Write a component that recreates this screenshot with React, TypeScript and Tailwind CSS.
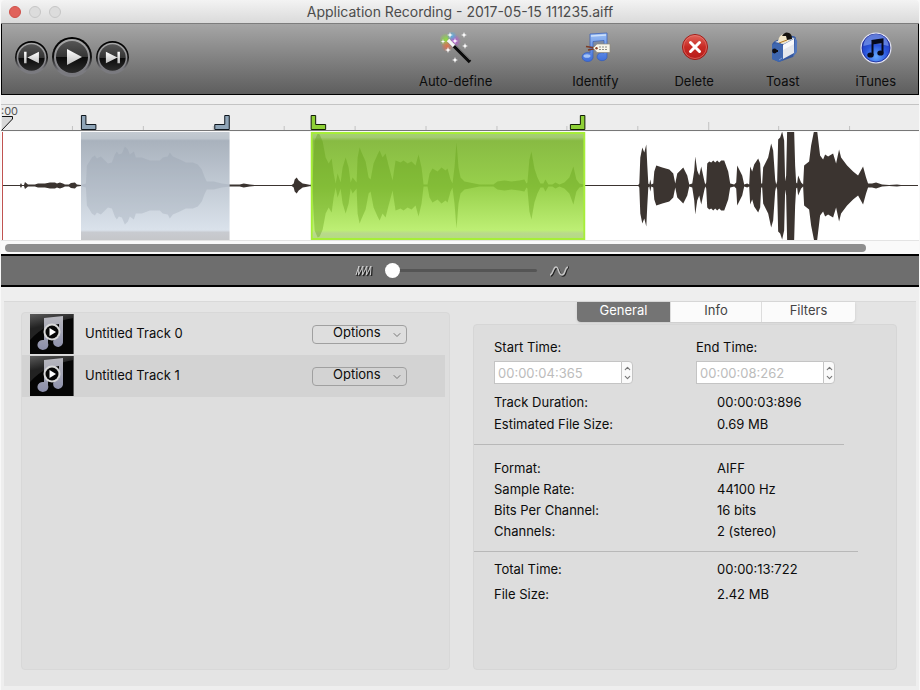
import React, { useState } from 'react';
import { ChevronDown, ChevronUp } from 'lucide-react';

// x position and half height of the waveform envelope
const envelope: [number, number][] = [
    [2, 0.4], [19, 0.4], [20, 0.4], [21, 2.5], [22, 0.5], [24, 0.5], [25, 3.5], [28, 1], [31, 1], [35, 1], [38, 2], [45, 2], [50, 3], [55, 3], [57, 2],
    [60, 3], [63, 2], [65, 1], [69, 1], [71, 2.5], [75, 3], [77, 1], [81, 0.5],
    [86, 2], [87, 20], [89, 23], [92, 28], [95, 30], [97, 27], [101, 29], [104, 26], [108, 22], [112, 23], [115, 31], [117, 34], [119, 31], [122, 32],
    [125, 39], [128, 36], [130, 31], [134, 34], [136, 28], [142, 28], [150, 25], [160, 25], [163, 28], [168, 29], [170, 33], [173, 29], [180, 26],
    [186, 23], [193, 23], [198, 21], [202, 16], [205, 8], [207, 4], [214, 4], [222, 2], [230, 1],
    [240, 1], [244, 2], [250, 1], [255, 0.5], [270, 0.4], [292, 0.4], [294, 2], [295, 6], [297, 8], [299, 5], [303, 2], [306, 1.5], [311, 0.5],
    [313, 10], [315, 45], [318, 52], [320, 51], [323, 44], [326, 28], [329, 22], [332, 27], [334, 12], [336, 2], [338, 12], [341, 3], [343, 18],
    [346, 28], [349, 18], [351, 3], [353, 8], [357, 3], [358, 28], [360, 38], [362, 33], [366, 24], [369, 8], [371, 6], [374, 22], [378, 31],
    [380, 35], [383, 28], [386, 32], [389, 20], [393, 5], [396, 25], [401, 23], [404, 25], [408, 22], [412, 24], [416, 20], [419, 31], [422, 18],
    [424, 1], [428, 1], [430, 12], [433, 17], [438, 14], [442, 18], [446, 15], [448, 17], [451, 6], [453, 2], [455, 18], [457, 43], [459, 18],
    [461, 8], [465, 4], [470, 3], [480, 1], [490, 1], [494, 1], [498, 4], [505, 5], [512, 4], [520, 5], [525, 6], [527, 2], [528, 3], [530, 26],
    [532, 34], [535, 17], [538, 8], [541, 2], [544, 2], [546, 6], [549, 1], [553, 1], [556, 3], [560, 1], [565, 3], [570, 8], [574, 19], [577, 6],
    [580, 2], [586, 0.4],
    [639, 0.4], [640, 2], [641, 28], [643, 38], [645, 33], [647, 41], [648, 20], [649, 2], [650, 1], [651, 6], [652, 1], [654, 2], [655, 14], [657, 20], [663, 18],
    [670, 16], [674, 12], [676, 2], [678, 12], [684, 18], [688, 10], [690, 1], [693, 2], [695, 15], [696, 29], [698, 15], [700, 10], [702, 19],
    [705, 5], [706, 1], [707, 3], [708, 22], [710, 24], [712, 23], [714, 25], [716, 23], [718, 25], [720, 23], [722, 25], [725, 25], [729, 14], [731, 2],
    [735, 1], [737, 3], [738, 20], [743, 10], [745, 1], [748, 2], [750, 1], [751, 19], [753, 14], [755, 21], [759, 27], [761, 22], [762, 2], [763, 2],
    [764, 18], [769, 28], [772, 42], [774, 35], [776, 6], [777, 1], [778, 4], [779, 46], [781, 48], [783, 54], [785, 45], [786, 4], [787, 10], [788, 55],
    [795, 55], [796, 20], [797, 3], [798, 2], [799, 10], [802, 3], [804, 1], [805, 20], [810, 24], [812, 40], [815, 55], [818, 55], [821, 30], [824, 26],
    [826, 31], [829, 29], [834, 32], [837, 22], [840, 36], [842, 28], [848, 20], [854, 14], [859, 10], [864, 19], [867, 8], [869, 2], [873, 2], [877, 3],
    [883, 1], [890, 0.5], [898, 1], [902, 0.6], [919, 0.4],
];

const wavePath =
    'M' + envelope.map(([x, a]) => `${x} ${54.5 - a}`).join('L') +
    'L' + [...envelope].reverse().map(([x, a]) => `${x} ${54.5 + a}`).join('L') + 'Z';

const ticks = [72, 143, 213, 284, 355, 426, 497, 567, 638, 709, 779, 850];

const tracks = ['Untitled Track 0', 'Untitled Track 1'];

const Ruler = () => (
    <div className="relative h-[27px] overflow-hidden border-t border-[#c4c4c4] border-b border-b-[#777777] bg-[#ededed]">
        <span className="absolute left-0 top-0 text-[11px] leading-[13px] text-[#555555]">:00</span>
        <svg className="absolute inset-0 h-full w-full" viewBox="1 105 919 25" preserveAspectRatio="none">
            {ticks.map((x) => (
                <path key={x} d={`M${x + 0.5} ${x === 709 ? 122 : 126}V130`} stroke="#c2c2c2" />
            ))}
            <path d="M2 116.5H12.5V119L2 130" fill="#d8d8d8" stroke="#111111" />
            <path d="M81.5 115.5h4.5v9h10v5h-14.5z M229.5 115.5h-4.5v9h-10v5h14.5z" fill="#8fa5b8" stroke="#0c141c" />
            <path d="M311.5 115.5h4.5v9h10v5h-14.5z M585.5 115.5h-4.5v9h-10v5h14.5z" fill="#8ed036" stroke="#101c04" />
        </svg>
    </div>
)

const Waveform = () => (
    <svg className="block h-[110px] w-full bg-white" viewBox="1 0 919 110" preserveAspectRatio="none">
        <defs>
            <linearGradient id="blue" x1="0" y1="0" x2="0" y2="1">
                <stop offset="0" stopColor="#c3cad1" />
                <stop offset="0.06" stopColor="#bcc4cc" />
                <stop offset="0.08" stopColor="#a9b2bd" />
                <stop offset="0.9" stopColor="#dae2eb" />
                <stop offset="0.92" stopColor="#c8cbd0" />
                <stop offset="1" stopColor="#c5c6c9" />
            </linearGradient>
            <linearGradient id="green" x1="0" y1="0" x2="0" y2="1">
                <stop offset="0" stopColor="#a9d377" />
                <stop offset="0.05" stopColor="#a2cb70" />
                <stop offset="0.08" stopColor="#88bb43" />
                <stop offset="0.5" stopColor="#98d04c" />
                <stop offset="0.9" stopColor="#bdef74" />
                <stop offset="0.93" stopColor="#b9d98c" />
                <stop offset="1" stopColor="#b2dc7c" />
            </linearGradient>
            <clipPath id="blueClip"><path d="M81 0h149v110h-149z" /></clipPath>
            <clipPath id="greenClip"><path d="M311 0h275v110h-275z" /></clipPath>
        </defs>
        <path d={wavePath} fill="#3b3430" />
        <g clipPath="url(#blueClip)">
            <rect x="81" y="1" width="149" height="109" fill="url(#blue)" />
            <path d={wavePath} fill="#8f9ba8" fillOpacity="0.28" />
        </g>
        <g clipPath="url(#greenClip)">
            <rect x="311" y="1" width="275" height="109" fill="url(#green)" />
            <path d={wavePath} fill="#5f9a14" fillOpacity="0.36" />
            <rect x="312" y="2" width="273" height="106" fill="none" stroke="#a6ee38" strokeWidth="2" />
        </g>
        <path d="M2.5 0V109" stroke="#c0504d" />
        <path d="M1 0.5H920" stroke="#fafafa" />
        <path d="M1 109.5H920" stroke="#e4e4e4" />
    </svg>
)

const TransportButton = ({ label, size, children }: {
    label: string
    size: string
    children: React.ReactNode
}) => (
    <button aria-label={label} className={`block rounded-full ${size}`}>
        <svg viewBox="0 0 40 40" className="h-full w-full">
            <defs>
                <linearGradient id="rim" x1="0" y1="0" x2="0" y2="1">
                    <stop offset="0" stopColor="#000000" />
                    <stop offset="0.5" stopColor="#111111" />
                    <stop offset="0.85" stopColor="#7b7b80" />
                </linearGradient>
                <linearGradient id="ring" x1="0" y1="0" x2="0" y2="1">
                    <stop offset="0" stopColor="#a8a8a8" />
                    <stop offset="1" stopColor="#77777d" />
                </linearGradient>
                <linearGradient id="face" x1="0" y1="0" x2="0" y2="1">
                    <stop offset="0" stopColor="#555555" />
                    <stop offset="0.5" stopColor="#343434" />
                    <stop offset="0.51" stopColor="#0a0a0a" />
                    <stop offset="1" stopColor="#2b2b2b" />
                </linearGradient>
                <linearGradient id="glyph" x1="0" y1="0" x2="0" y2="1">
                    <stop offset="0" stopColor="#ffffff" />
                    <stop offset="1" stopColor="#bdbdbd" />
                </linearGradient>
            </defs>
            <circle cx="20" cy="20" r="20" fill="url(#rim)" />
            <circle cx="20" cy="20" r="18" fill="url(#ring)" />
            <circle cx="20" cy="20" r="16" fill="url(#face)" />
            {children}
        </svg>
    </button>
)

const WandIcon = () => (
    <svg viewBox="0 0 32 32" className="h-8 w-8">
        <defs>
            <radialGradient id="g1"><stop offset="0" stopColor="#8ee03c" /><stop offset="1" stopColor="#8ee03c" stopOpacity="0" /></radialGradient>
            <radialGradient id="g2"><stop offset="0" stopColor="#b94bd8" /><stop offset="1" stopColor="#b94bd8" stopOpacity="0" /></radialGradient>
            <radialGradient id="g3"><stop offset="0" stopColor="#e0704a" /><stop offset="1" stopColor="#e0704a" stopOpacity="0" /></radialGradient>
            <radialGradient id="g4"><stop offset="0" stopColor="#58aede" /><stop offset="1" stopColor="#58aede" stopOpacity="0" /></radialGradient>
        </defs>
        <circle cx="6" cy="8" r="7" fill="url(#g1)" />
        <circle cx="14" cy="9" r="7" fill="url(#g2)" />
        <circle cx="7" cy="14" r="6" fill="url(#g3)" />
        <circle cx="12" cy="4" r="5" fill="url(#g4)" />
        <path d="M9 9L30 30" stroke="#0b0b0b" strokeWidth="3.6" />
        <path d="M15 13L30 28" stroke="#777777" strokeWidth="0.8" />
        <path d="M8 8L14 14" stroke="#f6f6f6" strokeWidth="3.6" />
        <path d="M10 0l.7 2.3 2.3.7-2.3.7-.7 2.3-.7-2.3-2.3-.7 2.3-.7zM24 0l.8 2.2 2.2.8-2.2.8-.8 2.2-.8-2.2-2.2-.8 2.2-.8zM25 11l.8 2.2 2.2.8-2.2.8-.8 2.2-.8-2.2-2.2-.8 2.2-.8zM15 6l.7 2.3 2.3.7-2.3.7-.7 2.3-.7-2.3-2.3-.7 2.3-.7zM3 7l.6 1.9 1.9.6-1.9.6-.6 1.9-.6-1.9-1.9-.6 1.9-.6zM8 15l.8 2.2 2.2.8-2.2.8-.8 2.2-.8-2.2-2.2-.8 2.2-.8zM15 25l.8 2.2 2.2.8-2.2.8-.8 2.2-.8-2.2-2.2-.8 2.2-.8z" fill="#ffffff" />
    </svg>
)

const IdentifyIcon = () => (
    <svg viewBox="0 0 32 32" className="h-8 w-8">
        <defs>
            <linearGradient id="note" x1="0" y1="0" x2="0" y2="1">
                <stop offset="0" stopColor="#9cc0f4" />
                <stop offset="1" stopColor="#3d6ddb" />
            </linearGradient>
        </defs>
        <path d="M11 2L28 1V24a5 4 0 1 1-3-3V8.500L14 9.500V26a5.500 4.500 0 1 1-3-5z" fill="url(#note)" stroke="#345cba" strokeWidth="0.7" />
        <path d="M12 4L27 3" stroke="#cfe1fb" strokeWidth="1.5" />
        <path d="M14 10L25 9V20H14z" fill="#5f7fb8" fillOpacity="0.35" />
        <ellipse cx="8" cy="24" rx="3.5" ry="1.8" fill="#a5c4f6" />
        <path d="M17 16L7 14.500M17 16.500L9 18" stroke="#7b3b26" strokeWidth="1.4" />
        <path d="M14 16L18 12H31V20.500H18z" fill="#f8f5ea" stroke="#8f8a7c" strokeWidth="0.7" />
        <circle cx="17.500" cy="16.200" r="1.2" fill="#8a4126" />
        <path d="M20 15H29M20 17.500H29" stroke="#8d8d88" strokeDasharray="2 1" />
    </svg>
)

const DeleteIcon = () => (
    <svg viewBox="0 0 32 32" className="h-8 w-8">
        <defs>
            <linearGradient id="red" x1="0" y1="0" x2="0" y2="1">
                <stop offset="0" stopColor="#e2665c" />
                <stop offset="0.5" stopColor="#c72a24" />
                <stop offset="1" stopColor="#b81c1a" />
            </linearGradient>
        </defs>
        <circle cx="17" cy="15" r="12.5" fill="url(#red)" stroke="#a01a16" />
        <circle cx="17" cy="15" r="11.5" fill="none" stroke="#e8857a" strokeWidth="0.6" />
        <path d="M12.500 10.500L21.500 19.500M21.500 10.500L12.500 19.500" stroke="#ffffff" strokeWidth="3" strokeLinecap="round" />
    </svg>
)

const ToastIcon = () => (
    <svg viewBox="0 0 32 32" className="h-8 w-8">
        <path d="M5 13Q5 11 8 9L20 4Q28 3 29 6V20L26 25 12 30 5 27z" fill="#35589f" />
        <path d="M8 10L20 5 28 6 17 12z" fill="#d8dde4" />
        <path d="M16 13L27 7V21L16 27z" fill="#e4e7ec" />
        <path d="M16 13L27 7V12L16 18z" fill="#f7f8fa" />
        <path d="M5 13Q8 10 13 12 16 13 16 16V28L12 30 5 27z" fill="#3f67b0" />
        <path d="M28 6Q31 8 30 12V20L26 25 27 21z" fill="#5277bd" />
        <path d="M11 9Q12 3 17 2 19 1 20 3L22 9 15 12z" fill="#f2e6c8" />
        <path d="M15 4Q18-1 22 1 25 2 25 7L20 8 19 4z" fill="#15120f" />
        <path d="M12 11L20 8" stroke="#b0761f" />
        <circle cx="7.5" cy="19" r="2.4" fill="#0d0d14" />
        <path d="M8 19H11" stroke="#0d0d14" strokeWidth="2" />
        <path d="M12 28L15 26" stroke="#7d9cd6" />
    </svg>
)

const ItunesIcon = () => (
    <svg viewBox="0 0 32 32" className="h-8 w-8">
        <defs>
            <radialGradient id="disc" cx="0.5" cy="0.8" r="0.8">
                <stop offset="0" stopColor="#63a8ff" />
                <stop offset="0.5" stopColor="#2a55dc" />
                <stop offset="1" stopColor="#1c2cae" />
            </radialGradient>
        </defs>
        <circle cx="16" cy="16" r="15.5" fill="#dfe1f2" />
        <circle cx="16" cy="16" r="14" fill="url(#disc)" stroke="#14208e" strokeWidth="0.8" />
        <path d="M3.500 14A12.500 12 0 0 1 28.500 14Q16 10 3.500 14z" fill="#8aaaf2" fillOpacity="0.6" />
        <path d="M11.500 9L22.500 7.500V20.500M12.500 9V23" fill="none" stroke="#06091c" strokeWidth="2" />
        <path d="M12 8.500L23 7V11L12 12.500z" fill="#06091c" />
        <ellipse cx="10.5" cy="23" rx="3.2" ry="2.6" fill="#06091c" />
        <ellipse cx="20.5" cy="21" rx="3.2" ry="2.6" fill="#06091c" />
    </svg>
)

const TrackArt = () => (
    <svg viewBox="0 0 44 40" className="ml-2 h-10 w-11 shrink-0">
        <defs>
            <linearGradient id="art" x1="0" y1="0" x2="0.4" y2="1">
                <stop offset="0" stopColor="#5c5c5c" />
                <stop offset="0.5" stopColor="#222222" />
            </linearGradient>
            <linearGradient id="artNote" x1="0" y1="0" x2="0" y2="1">
                <stop offset="0" stopColor="#b9b9bf" />
                <stop offset="1" stopColor="#8b8eaa" />
            </linearGradient>
        </defs>
        <path d="M0 0H44V40H0z" fill="#050505" />
        <path d="M0 0H44V4Q16 8 0 26z" fill="url(#art)" />
        <path d="M14 4L33 2V27A5 5 0 1 1 29 23V10L18 12V29A5.500 5 0 1 1 14 26z" fill="url(#artNote)" />
        <circle cx="22" cy="18" r="8.5" fill="#d9d9d9" />
        <circle cx="22" cy="18" r="6.5" fill="#070707" />
        <path d="M19.500 14L26 18 19.500 22z" fill="#ffffff" />
        <path d="M43.500 0V40" stroke="#5b5b5b" />
    </svg>
)

const tools = [
    { name: 'Auto-define', icon: WandIcon, spacing: 'mr-7' },
    { name: 'Identify', icon: IdentifyIcon, spacing: 'mr-1' },
    { name: 'Delete', icon: DeleteIcon, spacing: '' },
    { name: 'Toast', icon: ToastIcon, spacing: 'mr-1' },
    { name: 'iTunes', icon: ItunesIcon, spacing: '' },
]

const TimeField = ({ id, label, value }: {
    id: string
    label: string
    value: string
}) => (
    <div>
        <label htmlFor={id} className="block leading-5">{label}</label>
        <div className="mt-1 flex h-[23px]">
            <input
                id={id}
                defaultValue={value}
                className="w-[127px] border border-[#c4c4c4] border-r-0 bg-white px-[3px] pt-0.5 text-[#bcbcbc] outline-none"
            />
            <div className="flex w-3 flex-col items-center justify-center rounded-r border border-[#c4c4c4] bg-[#fafafa] text-[#777777]">
                <button aria-label={`Increase ${label}`}><ChevronUp className="h-[9px] w-[9px]" strokeWidth={3} /></button>
                <button aria-label={`Decrease ${label}`}><ChevronDown className="h-[9px] w-[9px]" strokeWidth={3} /></button>
            </div>
        </div>
    </div>
)

const Row = ({ name, value }: { name: string; value: string }) => (
    <div className="flex">
        <dt className="w-[223px]">{name}</dt>
        <dd>{value}</dd>
    </div>
)

const App = () => {

    const [tab, setTab] = useState('General')
    const [zoom, setZoom] = useState(0)

    return (
        <div className="flex min-h-screen flex-col bg-[#f8f8f8] px-px font-[Inter,'Liberation_Sans',sans-serif] text-[13px] text-[#0c0c0c]">
            <header className="grid h-6 grid-cols-[1fr_auto_1fr] items-center rounded-t border-b border-[#7d7d7d] bg-linear-to-b from-[#f3f3f3] to-[#dadada] pt-px">
                <div className="flex gap-2 pl-2">
                    <button aria-label="Close" className="h-3 w-3 rounded-full border border-[#cf5049] bg-[#e0625b]" />
                    <button aria-label="Minimize" className="h-3 w-3 rounded-full border border-[#c6c6c6] bg-[#dcdcdc]" />
                    <button aria-label="Zoom" className="h-3 w-3 rounded-full border border-[#c6c6c6] bg-[#dcdcdc]" />
                </div>
                <h1 className="text-sm text-[#4c4c4c]">Application Recording - 2017-05-15 111235.aiff</h1>
            </header>

            <div className="flex h-[71px] border-x border-b border-black bg-linear-to-b from-[#a6a6a6] to-[#5e5e5e]">
                <div className="flex items-center gap-1 pb-1 pl-[13px]">
                    <TransportButton label="Previous" size="h-[33px] w-[33px]">
                        <path d="M11 13h3v14h-3zM29 13V27L15 20z" fill="url(#glyph)" />
                    </TransportButton>
                    <TransportButton label="Play" size="h-10 w-10">
                        <path d="M15 12L30 20 15 28z" fill="url(#glyph)" />
                    </TransportButton>
                    <TransportButton label="Next" size="h-[33px] w-[33px]">
                        <path d="M26 13h3v14h-3zM12 13V27L26 20z" fill="url(#glyph)" />
                    </TransportButton>
                </div>
                <div className="ml-auto flex gap-[52px] pr-[22px]">
                    {tools.map((tool) => (
                        <button key={tool.name} className={`flex flex-col items-center gap-2 pt-2 leading-[18px] ${tool.spacing}`}>
                            <tool.icon />
                            <span>{tool.name}</span>
                        </button>
                    ))}
                </div>
            </div>

            <div className="h-[9px] bg-[#efefef]" />
            <Ruler />
            <Waveform />
            <div className="h-[13px] bg-[#fafafa] px-1 pt-[3px]">
                <div className="h-2 w-[861px] max-w-full rounded-full bg-[#8f8f8f]" />
            </div>

            <div className="flex h-[33px] items-center justify-center gap-3 border-y-2 border-black bg-[#6e6e6e] pl-[3px]">
                <svg viewBox="0 0 18 12" className="h-3 w-[18px]" fill="none">
                    <path d="M2 11L5 2 4.500 11 9 2 8.500 11 13 2 12.500 11 17 2 16.500 11" stroke="#222222" strokeWidth="1.5" />
                    <path d="M1 10L4 1 3.500 10 8 1 7.500 10 12 1 11.500 10 16 1 15.500 10" stroke="#d0d0d0" />
                </svg>
                <input
                    type="range"
                    aria-label="Waveform zoom"
                    value={zoom}
                    onChange={(e) => setZoom(Number(e.target.value))}
                    className="h-4 w-[152px] appearance-none bg-transparent [&::-webkit-slider-runnable-track]:h-[3px] [&::-webkit-slider-runnable-track]:rounded-full [&::-webkit-slider-runnable-track]:bg-[#555555] [&::-webkit-slider-thumb]:-mt-[6px] [&::-webkit-slider-thumb]:h-[15px] [&::-webkit-slider-thumb]:w-[15px] [&::-webkit-slider-thumb]:appearance-none [&::-webkit-slider-thumb]:rounded-full [&::-webkit-slider-thumb]:bg-white"
                />
                <svg viewBox="0 0 20 12" className="h-3 w-5" fill="none">
                    <path d="M2 11C5 11 5 3 8 3S10 11 14 11 16 4 20 2" stroke="#222222" strokeWidth="1.5" />
                    <path d="M1 10C4 10 4 2 7 2S9 10 13 10 15 3 19 2" stroke="#c4c4c4" strokeWidth="1.5" />
                </svg>
            </div>

            <main className="flex flex-1 flex-col bg-[#eeeeee] px-[3px] pt-[14px] pb-1">
                <div className="grid flex-1 grid-cols-[429fr_424fr] gap-[23px] border-t border-[#d9d9d9] bg-[#e4e4e4] pr-[19px] pb-4 pl-[17px]">
                    <ul className="mt-2.5 rounded border border-[#d8d8d8] bg-[#dedede] pr-1">
                        {tracks.map((name, i) => (
                            <li key={name} className={`flex h-[42px] items-center ${i % 2 ? 'bg-[#d3d3d3]' : ''}`}>
                                <TrackArt />
                                <label htmlFor={`options-${i}`} className="w-[238px] pl-[11px]">{name}</label>
                                <div className="relative">
                                    <select
                                        id={`options-${i}`}
                                        className="block h-[19px] w-[95px] appearance-none rounded border border-[#a0a0a0] bg-transparent pb-1 pl-5 leading-[13px] outline-none"
                                    >
                                        <option>Options</option>
                                    </select>
                                    <ChevronDown className="pointer-events-none absolute right-1 top-1 h-3 w-3 text-[#777777]" />
                                </div>
                            </li>
                        ))}
                    </ul>

                    <section className="flex flex-col">
                        <div className="ml-[104px] grid h-5 w-[278px] grid-cols-[94px_91px_93px] overflow-hidden rounded-b shadow-sm">
                            {['General', 'Info', 'Filters'].map((name) => (
                                <button
                                    key={name}
                                    onClick={() => setTab(name)}
                                    className={`border-r border-[#dddddd] pb-1 leading-4 last:border-r-0 ${tab === name ? 'bg-[#747474] text-white' : 'bg-[#fbfbfb] text-[#444444]'}`}
                                >
                                    {name}
                                </button>
                            ))}
                        </div>
                        <div className="mt-[2px] flex-1 rounded border border-[#d6d6d6] bg-[#dddddd] pt-3">
                            <div className="flex gap-[63px] pl-5">
                                <TimeField id="start" label="Start Time:" value="00:00:04:365" />
                                <TimeField id="end" label="End Time:" value="00:00:08:262" />
                            </div>
                            <dl className="mt-[7px] pl-5 leading-[22px]">
                                <Row name="Track Duration:" value="00:00:03:896" />
                                <Row name="Estimated File Size:" value="0.69 MB" />
                            </dl>
                            <hr className="mt-[9px] mr-[52px] border-[#b8b8b8]" />
                            <dl className="mt-[13px] pl-5 leading-[21px]">
                                <Row name="Format:" value="AIFF" />
                                <Row name="Sample Rate:" value="44100 Hz" />
                                <Row name="Bits Per Channel:" value="16 bits" />
                                <Row name="Channels:" value="2 (stereo)" />
                            </dl>
                            <hr className="mt-[9px] mr-[38px] border-[#b8b8b8]" />
                            <dl className="mt-[5px] pl-5 leading-[25px]">
                                <Row name="Total Time:" value="00:00:13:722" />
                                <Row name="File Size:" value="2.42 MB" />
                            </dl>
                        </div>
                    </section>
                </div>
            </main>
        </div>
    )

};

export default App;
